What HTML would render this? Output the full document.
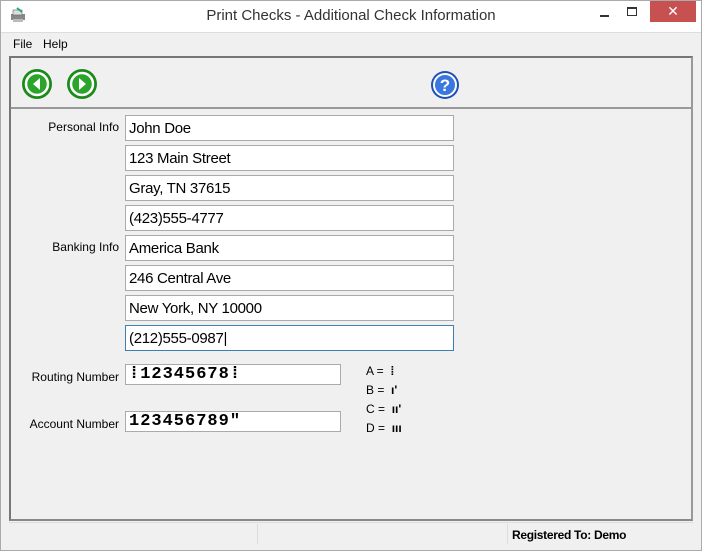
<!DOCTYPE html>
<html><head><style>
*{margin:0;padding:0;box-sizing:border-box}
body{width:702px;height:551px;background:#f0f0f0;font-family:"Liberation Sans",sans-serif;position:relative;overflow:hidden}
.abs{position:absolute}
.win{left:0;top:0;width:702px;height:551px;border:1px solid #aaa}
.title{left:1px;top:1px;width:700px;height:32px;background:#fff}
.tt{left:0;width:702px;top:7px;text-align:center;font-size:15px;color:#333}
.close{left:650px;top:1px;width:46px;height:21px;background:#c75050;color:#fff;text-align:center;font-size:14px;line-height:21px}
.menu{font-size:12px;top:37px}
.panel{left:9px;top:56px;width:684px;height:465px;border:2px solid #777;border-right-color:#999;border-bottom-color:#888}
.tb{left:11px;top:107px;width:680px;height:2px;background:#999}
.lbl{font-size:12px;color:#000;text-align:right;width:110px;left:9px}
.in{left:125px;width:329px;height:26px;background:#fff;border:1px solid #aaa;font-size:15px;letter-spacing:-0.3px;padding:4px 0 0 3px;color:#000}
.mi{left:125px;width:216px;height:21px;background:#fff;border:1px solid #aaa;font:bold 17px "Liberation Mono",monospace;padding:0 0 0 3px;line-height:20px;letter-spacing:1px}
.leg{font-size:12px;left:366px}
.sb{left:9px;top:522px;width:684px;height:23px;border-top:1px solid #ddd}
</style></head><body>
<div class="abs win"></div>
<div class="abs title"></div>
<svg class="abs" style="left:9px;top:6px" width="18" height="18"><rect x="2" y="8" width="14" height="6" fill="#888"/><rect x="4" y="4" width="9" height="5" fill="#ddd" stroke="#666" stroke-width=".6"/><path d="M8 2l5 4" stroke="#2a8" stroke-width="2"/><rect x="4" y="13" width="10" height="3" fill="#bbb"/></svg>
<div class="abs tt">Print Checks - Additional Check Information</div>
<div class="abs" style="left:600px;top:15px;width:9px;height:2px;background:#333"></div>
<div class="abs" style="left:627px;top:7px;width:10px;height:9px;border:1px solid #333;border-top-width:2px"></div>
<div class="abs close">✕</div>
<div class="abs" style="left:1px;top:32px;width:700px;height:1px;background:#ddd"></div>
<div class="abs menu" style="left:13px">File</div>
<div class="abs menu" style="left:43px">Help</div>
<div class="abs panel"></div>
<div class="abs tb"></div>
<svg class="abs" style="left:21px;top:68px" width="34" height="34"><circle cx="16" cy="16" r="15" fill="#1b8a1b"/><circle cx="16" cy="16" r="11" fill="#2aa52a" stroke="#fff" stroke-width="2.5"/><path d="M19 10l-7 6 7 6z" fill="#fff"/></svg>
<svg class="abs" style="left:66px;top:68px" width="34" height="34"><circle cx="16" cy="16" r="15" fill="#1b8a1b"/><circle cx="16" cy="16" r="11" fill="#2aa52a" stroke="#fff" stroke-width="2.5"/><path d="M13 10l7 6-7 6z" fill="#fff"/></svg>
<svg class="abs" style="left:430px;top:70px" width="30" height="30"><circle cx="15" cy="15" r="14" fill="#1d4fb8"/><circle cx="15" cy="15" r="11" fill="#3a78e0" stroke="#fff" stroke-width="2"/><text x="15" y="21" text-anchor="middle" font-size="17" font-weight="bold" fill="#fff" font-family="Liberation Sans">?</text></svg>
<div class="abs lbl" style="top:120px">Personal Info</div>
<div class="abs lbl" style="top:240px">Banking Info</div>
<div class="abs in" style="top:115px">John Doe</div>
<div class="abs in" style="top:145px">123 Main Street</div>
<div class="abs in" style="top:175px">Gray, TN 37615</div>
<div class="abs in" style="top:205px">(423)555-4777</div>
<div class="abs in" style="top:235px">America Bank</div>
<div class="abs in" style="top:265px">246 Central Ave</div>
<div class="abs in" style="top:295px">New York, NY 10000</div>
<div class="abs in" style="top:325px;border-color:#3c7fb1">(212)555-0987|</div>
<div class="abs lbl" style="top:370px">Routing Number</div>
<div class="abs lbl" style="top:417px">Account Number</div>
<div class="abs mi" style="top:364px">⁞12345678⁞</div>
<div class="abs mi" style="top:411px">123456789"</div>
<div class="abs leg" style="top:364px">A = &nbsp;<b>⁞</b></div>
<div class="abs leg" style="top:383px">B = &nbsp;<b>ı'</b></div>
<div class="abs leg" style="top:402px">C = &nbsp;<b>ıı'</b></div>
<div class="abs leg" style="top:421px">D = &nbsp;<b>ııı</b></div>
<div class="abs sb"></div>
<div class="abs" style="left:257px;top:524px;width:1px;height:20px;background:#ddd"></div>
<div class="abs" style="left:507px;top:524px;width:1px;height:20px;background:#ddd"></div>
<div class="abs" style="left:512px;top:528px;font-size:12px;font-weight:bold;letter-spacing:-0.3px">Registered To: Demo</div>
</body></html>
